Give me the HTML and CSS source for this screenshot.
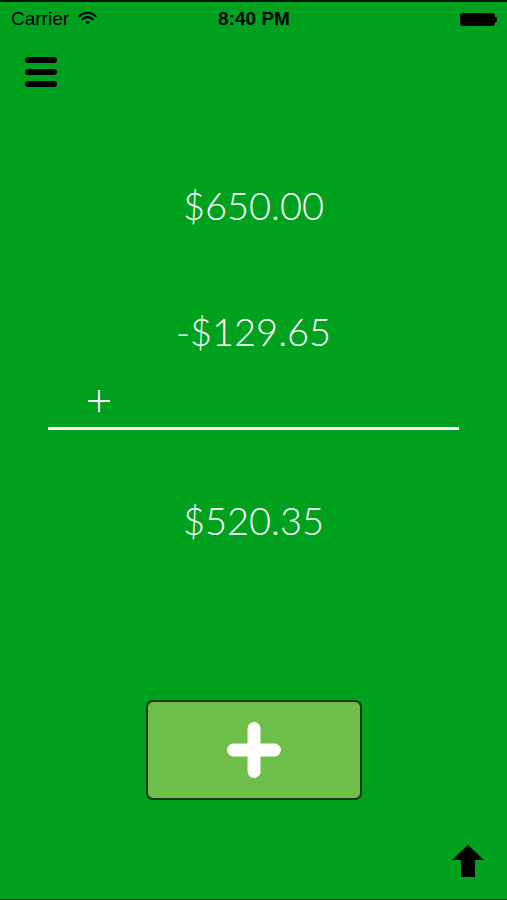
FILE: index.html
```html
<!DOCTYPE html>
<html>
<head>
<meta charset="utf-8">
<link rel="stylesheet" href="styles.css">
</head>
<body>
<div class="screen">
  <div class="status">
    <div class="status-left">
      <span class="carrier">Carrier</span>
      <svg class="wifi" width="19" height="14" viewBox="0 0 18 14">
        <path d="M1 5.2 A11 11 0 0 1 17 5.2" fill="none" stroke="#000" stroke-width="2.2" stroke-linecap="round"/>
        <path d="M4 8.2 A7 7 0 0 1 14 8.2" fill="none" stroke="#000" stroke-width="2.2" stroke-linecap="round"/>
        <path d="M6.7 11 L9 13.4 L11.3 11 A3.4 3.4 0 0 0 6.7 11 Z" fill="#000"/>
      </svg>
    </div>
    <div class="time">8:40 PM</div>
    <div class="status-right">
      <div class="battery"></div><div class="battery-tip"></div>
    </div>
  </div>

  <div class="menu-row">
    <svg class="menu" width="32" height="32" viewBox="0 0 32 32">
      <rect x="0" y="1" width="32" height="6" rx="3" fill="#000"/>
      <rect x="0" y="13" width="32" height="6" rx="3" fill="#000"/>
      <rect x="0" y="25" width="32" height="6" rx="3" fill="#000"/>
    </svg>
  </div>

  <div class="amount amount-top">$650.00</div>
  <div class="amount amount-mid">-$129.65</div>
  <div class="op-row">
    <svg class="op-plus" width="22" height="22" viewBox="0 0 22 22">
      <path d="M11 0 V22 M0 11 H22" stroke="#fff" stroke-width="2.2"/>
    </svg>
  </div>
  <div class="rule"></div>
  <div class="amount amount-result">$520.35</div>

  <div class="button-row">
    <div class="add-button">
      <svg width="54" height="56" viewBox="0 0 54 56">
        <path d="M27 6.5 V49.5 M6.5 28 H47.5" stroke="#fff" stroke-width="13" stroke-linecap="round"/>
      </svg>
    </div>
  </div>

  <div class="bottom-row">
    <svg class="up-arrow" width="32" height="32" viewBox="0 0 32 32">
      <path d="M16 0 L32 15 L23 15 L23 32 L9 32 L9 15 L0 15 Z" fill="#000"/>
    </svg>
  </div>
</div>
</body>
</html>
```

FILE: styles.css
```css
* { box-sizing: border-box; }
html, body { margin: 0; padding: 0; }
body { background: #00a11e; }

.screen {
  width: 507px;
  height: 900px;
  background: #00a11e;
  border-top: 2px solid #0a1a0a;
  border-bottom: 1px solid #0d3a12;
  display: flex;
  flex-direction: column;
  overflow: hidden;
}
.screen > * { flex-shrink: 0; }

.status {
  height: 34px;
  padding: 0 10px 0 11px;
  display: flex;
  align-items: center;
  justify-content: space-between;
  font-family: "Liberation Sans", Arial, sans-serif;
  color: #000;
}
.status-left { display: flex; align-items: center; gap: 9px; width: 120px; }
.carrier { font-size: 19px; }
.wifi { margin-top: -3px; }
.time { font-size: 19px; font-weight: bold; }
.status-right { width: 120px; display: flex; justify-content: flex-end; align-items: center; }
.battery { width: 35px; height: 13px; background: #000; border-radius: 3px; }
.battery-tip { width: 2px; height: 5px; background: #000; border-radius: 0 1px 1px 0; }

.menu-row { padding: 20px 0 0 25px; height: 54px; }

.amount {
  font-family: Lato, "Open Sans", sans-serif;
  font-weight: 300;
  font-size: 38px;
  color: #fff;
  text-align: center;
  height: 50px;
  line-height: 50px;
}
.amount-top { margin-top: 90px; }
.amount-mid { margin-top: 76px; }
.op-row { margin-top: 34px; height: 22px; padding-left: 88px; display: flex; }
.rule { margin: 15px 48px 0 48px; height: 3px; background: #fff; }
.amount-result { margin-top: 65px; }

.button-row { margin-top: 155px; display: flex; padding-left: 146px; }
.add-button {
  width: 216px;
  height: 100px;
  background: #6ebe4a;
  border: 2px solid #183616;
  border-radius: 7px;
  display: flex;
  align-items: center;
  justify-content: center;
}

.bottom-row { margin-top: 45px; display: flex; justify-content: flex-end; padding-right: 23px; }
```
